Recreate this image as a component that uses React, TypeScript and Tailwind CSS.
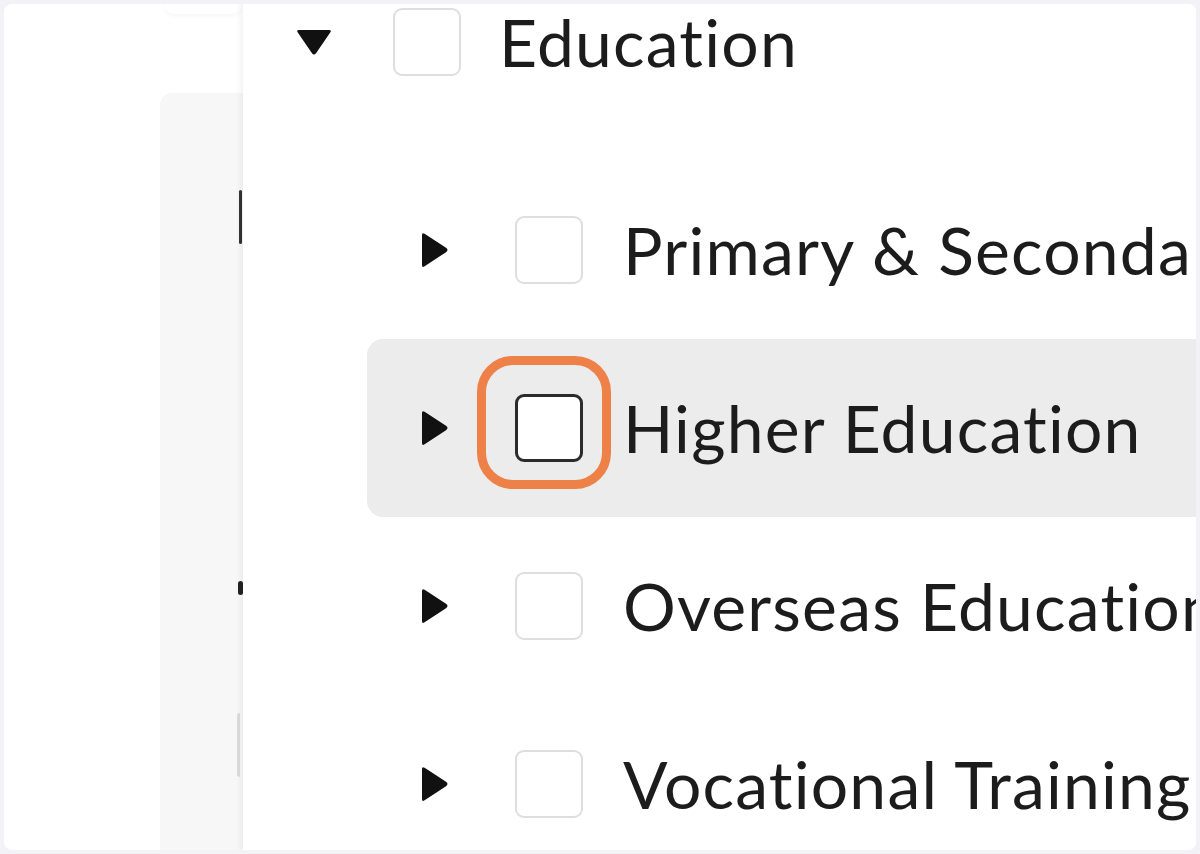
import React from "react";

const font = { fontFamily: "Lato, 'Open Sans', sans-serif" };

function CaretDown() {
  return (
    <svg width="38" height="28" viewBox="0 0 38 28" className="shrink-0">
      <path d="M4 2 H34 Q37 2 35.2 4.6 L21.2 25 Q19 28 16.8 25 L2.8 4.6 Q1 2 4 2 Z" fill="#111" />
    </svg>
  );
}

function CaretRight() {
  return (
    <svg width="30" height="38" viewBox="0 0 30 38" className="shrink-0">
      <path d="M2 4 Q2 1 4.6 2.8 L26 16.8 Q29 19 26 21.2 L4.6 35.2 Q2 37 2 34 Z" fill="#111" />
    </svg>
  );
}

function Box({ active }: { active?: boolean }) {
  return (
    <div className="relative shrink-0">
      <div
        className={
          active
            ? "h-[68px] w-[68px] rounded-[9px] border-[3px] border-[#2b2b2b] bg-white"
            : "h-[68px] w-[68px] rounded-[9px] border-2 border-[#dedede] bg-white"
        }
      />
      {active ? (
        <div className="pointer-events-none absolute bottom-[-27px] left-[-38px] right-[-28px] top-[-38px] rounded-[36px] border-[9px] border-[#ee8147]" />
      ) : null}
    </div>
  );
}

const children = [
  "Primary & Secondary Education",
  "Higher Education",
  "Overseas Education",
  "Vocational Training",
];

const label = "whitespace-nowrap leading-none tracking-[1.2px] [font-variant-ligatures:none]";

export default function App() {
  return (
    <div className="h-[854px] w-[1200px] overflow-hidden bg-[#f3f2f7] p-1" style={font}>
      <div className="relative flex h-full overflow-hidden rounded-lg bg-white">
        {/* page behind the menu */}
        <div className="w-[156px] shrink-0" />
        <div className="flex-1 pt-[89px]">
          <div className="flex h-full flex-col rounded-tl-xl bg-[#f7f7f7]">
            <div className="ml-[79px] mt-[97px] h-[54px] w-[3px] rounded-full bg-[#333]" />
            <div className="ml-[78px] mt-[337px] h-[14px] w-[5px] rounded-sm bg-[#222]" />
            <div className="ml-[77px] mt-[118px] h-[64px] w-[3px] rounded-l bg-[#dcdcdc]" />
          </div>
        </div>
        <div className="absolute left-[160px] top-0 h-[10px] w-[78px] rounded-b-xl shadow-[0_2px_4px_rgba(0,0,0,0.04)]" />

        {/* menu */}
        <div className="absolute bottom-0 left-[239px] right-0 top-[-51px] bg-white shadow-[-3px_0_6px_rgba(0,0,0,0.05)]">
          <div className="flex h-[178px] items-center pl-[52px] text-[66px] text-[#1c1c1c]">
            <CaretDown />
            <div className="ml-[60px]">
              <Box />
            </div>
            <span className={"ml-[38px] " + label}>Education</span>
          </div>
          <div className="ml-[124px] mt-[30px] flex flex-col">
            {children.map((c, i) => (
              <div
                key={c}
                className={
                  i === 1
                    ? "flex h-[178px] items-center rounded-l-2xl bg-[#ececec] pl-[53px] text-[66px] text-[#1c1c1c]"
                    : "flex h-[178px] items-center pl-[53px] text-[66px] text-[#1c1c1c]"
                }
              >
                <CaretRight />
                <div className="ml-[65px]">
                  <Box active={i === 1} />
                </div>
                <span className={"ml-[40px] " + label}>{c}</span>
              </div>
            ))}
          </div>
        </div>
      </div>
    </div>
  );
}
